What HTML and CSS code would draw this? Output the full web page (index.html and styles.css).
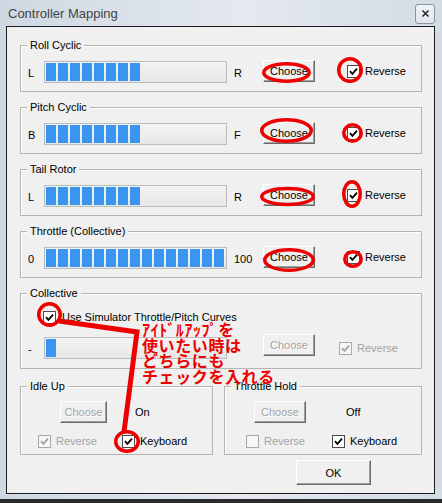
FILE: index.html
```html
<!DOCTYPE html>
<html lang="ja">
<head>
  <meta charset="UTF-8">
  <title>Controller Mapping</title>
  <link rel="stylesheet" href="styles.css">
</head>
<body>
  <div class="window">
    <div class="titlebar">
      <span class="title">Controller Mapping</span>
      <span class="close">
        <svg width="9" height="9" viewBox="0 0 9 9"><path d="M1.5 1.5l6 6M7.5 1.5l-6 6" stroke="#2b2b2b" stroke-width="1.6"/></svg>
      </span>
    </div>

    <div class="client">
      <div class="group axis">
        <span class="legend">Roll Cyclic</span>
        <div class="row">
          <span class="end">L</span>
          <div class="bar"><div class="fill" style="width:94px"></div></div>
          <span class="end right">R</span>
          <button class="btn">Choose</button>
          <label class="check rev"><span class="box"><svg viewBox="0 0 11 11"><path d="M2 5.2l2.4 2.6L9 2.6"/></svg></span>Reverse</label>
        </div>
      </div>

      <div class="group axis">
        <span class="legend">Pitch Cyclic</span>
        <div class="row">
          <span class="end">B</span>
          <div class="bar"><div class="fill" style="width:94px"></div></div>
          <span class="end right">F</span>
          <button class="btn">Choose</button>
          <label class="check rev"><span class="box"><svg viewBox="0 0 11 11"><path d="M2 5.2l2.4 2.6L9 2.6"/></svg></span>Reverse</label>
        </div>
      </div>

      <div class="group axis">
        <span class="legend">Tail Rotor</span>
        <div class="row">
          <span class="end">L</span>
          <div class="bar"><div class="fill" style="width:94px"></div></div>
          <span class="end right">R</span>
          <button class="btn">Choose</button>
          <label class="check rev"><span class="box"><svg viewBox="0 0 11 11"><path d="M2 5.2l2.4 2.6L9 2.6"/></svg></span>Reverse</label>
        </div>
      </div>

      <div class="group axis">
        <span class="legend">Throttle (Collective)</span>
        <div class="row">
          <span class="end">0</span>
          <div class="bar"><div class="fill" style="width:178px"></div></div>
          <span class="end right">100</span>
          <button class="btn">Choose</button>
          <label class="check rev"><span class="box"><svg viewBox="0 0 11 11"><path d="M2 5.2l2.4 2.6L9 2.6"/></svg></span>Reverse</label>
        </div>
      </div>

      <div class="group collective">
        <span class="legend">Collective</span>
        <label class="check curves"><span class="box"><svg viewBox="0 0 11 11"><path d="M2 5.2l2.4 2.6L9 2.6"/></svg></span>Use Simulator Throttle/Pitch Curves</label>
        <div class="row">
          <span class="end">-</span>
          <div class="bar"><div class="fill" style="width:11px"></div></div>
          <span class="end right"></span>
          <button class="btn" disabled>Choose</button>
          <label class="check rev off"><span class="box"><svg viewBox="0 0 11 11"><path d="M2 5.2l2.4 2.6L9 2.6"/></svg></span>Reverse</label>
        </div>
      </div>

      <div class="switches">
        <div class="group switch idle">
          <span class="legend">Idle Up</span>
          <div class="row">
            <button class="btn" disabled>Choose</button>
            <span class="state">On</span>
          </div>
          <div class="row small">
            <label class="check off first"><span class="box"><svg viewBox="0 0 11 11"><path d="M2 5.2l2.4 2.6L9 2.6"/></svg></span>Reverse</label>
            <label class="check"><span class="box"><svg viewBox="0 0 11 11"><path d="M2 5.2l2.4 2.6L9 2.6"/></svg></span>Keyboard</label>
          </div>
        </div>

        <div class="group switch hold">
          <span class="legend">Throttle Hold</span>
          <div class="row">
            <button class="btn" disabled>Choose</button>
            <span class="state">Off</span>
          </div>
          <div class="row small">
            <label class="check off first"><span class="box"></span>Reverse</label>
            <label class="check"><span class="box"><svg viewBox="0 0 11 11"><path d="M2 5.2l2.4 2.6L9 2.6"/></svg></span>Keyboard</label>
          </div>
        </div>
      </div>

      <div class="actions">
        <button class="btn ok">OK</button>
      </div>
    </div>
  </div>

  <!-- red notes drawn over the dialog -->
  <svg class="marks" width="442" height="503" viewBox="0 0 442 503">
    <g fill="none" stroke="#ec0000" stroke-width="3.5">
      <ellipse cx="286.5" cy="72.5" rx="22.75" ry="8.75"/>
      <ellipse cx="350" cy="70" rx="11.25" ry="11.25"/>
      <ellipse cx="286.5" cy="130.5" rx="24.75" ry="10.75"/>
      <ellipse cx="352.5" cy="133" rx="8.75" ry="8.25"/>
      <ellipse cx="287.5" cy="196.5" rx="25.75" ry="8"/>
      <ellipse cx="352" cy="194" rx="8.25" ry="12.25"/>
      <ellipse cx="289" cy="260" rx="24.25" ry="10.25"/>
      <ellipse cx="353" cy="259" rx="8.25" ry="7.25"/>
      <ellipse cx="49.5" cy="314.5" rx="10.75" ry="10.75"/>
      <ellipse cx="127" cy="441.5" rx="11.25" ry="9.75"/>
      <polyline points="59,321 137,332 124,432" stroke-width="5"/>
    </g>
  </svg>
  <div class="note">ｱｲﾄﾞﾙｱｯﾌﾟを<br>使いたい時は<br>どちらにも<br>チェックを入れる</div>
</body>
</html>
```

FILE: styles.css
```css
body {
  margin: 0;
  background-color: #2a2a2a;
  font-family: "Liberation Sans", Arial, sans-serif;
  font-size: 11px;
  color: #000;
}

.window {
  width: 442px;
  height: 499px;
  background: linear-gradient(to right, #cfd8e2, #e4e9ef 55%, #d3dbe4);
}

.titlebar {
  height: 26px;
  display: flex;
  align-items: center;
  justify-content: space-between;
  padding: 0 7px 0 8px;
  box-sizing: border-box;
}

.title {
  font-size: 13px;
  color: #444;
}

.close {
  width: 20px;
  height: 20px;
  box-sizing: border-box;
  border: 1px solid #8a939e;
  border-radius: 3px;
  background: linear-gradient(#f2f5f8, #dfe5ec);
  display: flex;
  align-items: center;
  justify-content: center;
  margin-top: 1px;
}

.client {
  margin-left: 6px;
  width: 429px;
  height: 468px;
  box-sizing: border-box;
  border: 1px solid #1c1c1c;
  background-color: #f0f0f0;
  padding-top: 18px;
}

.group {
  position: relative;
  margin-left: 13px;
  width: 402px;
  box-sizing: border-box;
  border: 1px solid #b4b4b4;
  box-shadow: inset 1px 1px 0 #fff;
}

.legend {
  position: absolute;
  top: -8px;
  left: 6px;
  padding: 0 3px;
  line-height: 14px;
  background-color: #f0f0f0;
}

.axis {
  height: 47px;
  padding-top: 14px;
  margin-bottom: 15px;
}

.row {
  display: flex;
  align-items: flex-start;
  height: 22px;
}

.end {
  width: 23px;
  padding-left: 7px;
  box-sizing: border-box;
  line-height: 22px;
  margin-top: 2px;
}

.end.right {
  width: 36px;
}

.bar {
  width: 183px;
  height: 22px;
  box-sizing: border-box;
  border: 1px solid #bcbcbc;
  padding: 1px;
  margin-top: 1px;
  background: linear-gradient(#f4f4f4, #e6e6e6);
}

.fill {
  height: 18px;
  background: repeating-linear-gradient(to right, #3a95f1 0 10px, transparent 10px 12px);
}

.btn {
  width: 52px;
  height: 22px;
  padding: 0;
  font: inherit;
  color: #000;
  background-color: #f0f0f0;
  border: 1px solid;
  border-color: #fff #6a6a6a #6a6a6a #fff;
  box-shadow: inset -1px -1px 0 #a0a0a0;
}

.btn:disabled {
  color: #a3a3a3;
  text-shadow: 1px 1px 0 #fff;
}

.check {
  display: flex;
  align-items: center;
  gap: 5px;
  line-height: 13px;
}

.box {
  width: 13px;
  height: 13px;
  box-sizing: border-box;
  border: 1px solid #4a4a4a;
  background-color: #fff;
  display: flex;
  align-items: center;
  justify-content: center;
}

.box svg {
  width: 11px;
  height: 11px;
  fill: none;
  stroke: #000;
  stroke-width: 1.8;
}

.check.off {
  color: #a3a3a3;
}

.check.off .box {
  border-color: #a8a8a8;
  background-color: #f6f6f6;
}

.check.off .box svg {
  stroke: #a0a0a0;
}

.rev {
  margin-left: 32px;
  margin-top: 5px;
}

.collective {
  height: 76px;
  padding-top: 17px;
  margin-top: 1px;
  margin-bottom: 17px;
}

.curves {
  margin-left: 22px;
  gap: 6px;
}

.collective .row {
  margin-top: 10px;
}

.collective .bar {
  margin-top: 3px;
}

.collective .end {
  margin-top: 4px;
}

.collective .rev {
  margin-left: 24px;
  margin-top: 8px;
}

.switches {
  display: flex;
  gap: 11px;
  margin-left: 13px;
}

.switches .group {
  margin-left: 0;
  height: 69px;
  padding-top: 14px;
}

.idle {
  width: 193px;
}

.hold {
  width: 198px;
}

.switch .state {
  line-height: 22px;
}

.idle .btn {
  width: 47px;
  margin: 0 28px 0 39px;
}

.hold .btn {
  margin: 0 40px 0 29px;
}

.row.small {
  height: 13px;
  margin-top: 12px;
}

.idle .first {
  width: 84px;
  margin-left: 17px;
}

.hold .first {
  width: 86px;
  margin-left: 21px;
}

.actions {
  margin-top: 5px;
  padding-left: 289px;
}

.btn.ok {
  width: 75px;
  height: 25px;
}

.marks {
  position: absolute;
  top: 0;
  left: 0;
  pointer-events: none;
}

.note {
  position: absolute;
  top: 322px;
  left: 142px;
  font-family: "Noto Sans CJK JP", sans-serif;
  font-size: 16px;
  font-weight: 700;
  line-height: 15.7px;
  letter-spacing: 0.6px;
  color: #ec0000;
  white-space: nowrap;
}
```
